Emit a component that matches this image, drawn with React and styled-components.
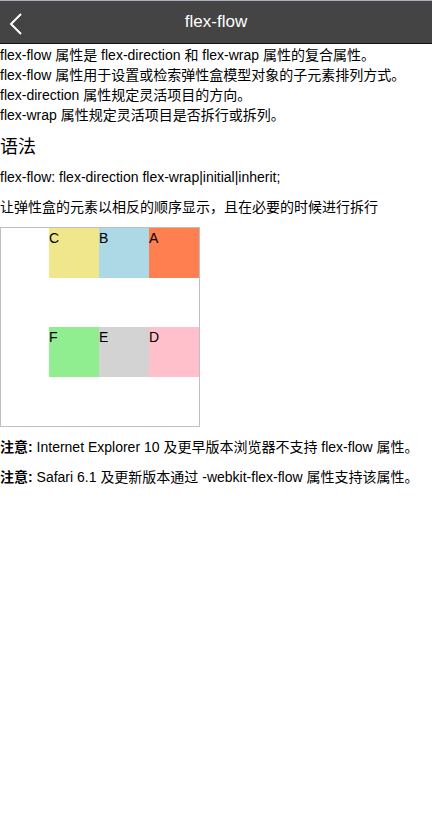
import styled, { createGlobalStyle } from 'styled-components';

const GlobalStyle = createGlobalStyle`
  * {
    box-sizing: border-box;
  }

  body {
    margin: 0;
    background: #fff;
    color: #000;
    font-family: 'Liberation Sans', 'Noto Sans CJK SC', sans-serif;
  }
`;

const items = [
  { id: 'A', color: 'coral' },
  { id: 'B', color: 'lightblue' },
  { id: 'C', color: 'khaki' },
  { id: 'D', color: 'pink' },
  { id: 'E', color: 'lightgrey' },
  { id: 'F', color: 'lightgreen' },
];

const App = () => {
  return (
    <>
      <GlobalStyle />
      <Header>
        <BackButton aria-label='back'>
          <svg width='14' height='22' viewBox='0 0 14 22' fill='none'>
            <path d='M12 1 L2 11 L12 21' stroke='#fff' strokeWidth='2' />
          </svg>
        </BackButton>
        <HeaderTitle>flex-flow</HeaderTitle>
      </Header>
      <Content>
        <Intro>
          flex-flow 属性是 flex-direction 和 flex-wrap 属性的复合属性。
          <br />
          flex-flow 属性用于设置或检索弹性盒模型对象的子元素排列方式。
          <br />
          flex-direction 属性规定灵活项目的方向。
          <br />
          flex-wrap 属性规定灵活项目是否拆行或拆列。
        </Intro>
        <Heading>语法</Heading>
        <Text>flex-flow: flex-direction flex-wrap|initial|inherit;</Text>
        <Text>让弹性盒的元素以相反的顺序显示，且在必要的时候进行拆行</Text>
        <Demo>
          {items.map(({ id, color }) => (
            <Item key={id} $bg={color}>
              {id}
            </Item>
          ))}
        </Demo>
        <Note>
          <b>注意:</b> Internet Explorer 10 及更早版本浏览器不支持 flex-flow 属性。
        </Note>
        <Note>
          <b>注意:</b> Safari 6.1 及更新版本通过 -webkit-flex-flow 属性支持该属性。
        </Note>
      </Content>
    </>
  );
};

const Header = styled.header`
  position: relative;
  height: 44px;
  display: flex;
  align-items: center;
  justify-content: center;
  background: #444;
  border-top: 1px solid #a9b0bc;
  border-bottom: 1px solid #111;
`;

const BackButton = styled.button`
  position: absolute;
  left: 9px;
  top: 12px;
  padding: 0;
  border: none;
  background: none;
  display: flex;
`;

const HeaderTitle = styled.h1`
  margin: 0;
  font-size: 17px;
  font-weight: normal;
  color: #fff;
`;

const Content = styled.main`
  font-size: 14px;
  line-height: 20px;
  padding-top: 1px;
`;

const Intro = styled.p`
  margin: 0;
`;

const Heading = styled.h2`
  margin: 10px 0 8px;
  font-size: 18px;
  font-weight: normal;
  line-height: 24px;
`;

const Text = styled.p`
  margin: 0 0 10px;
`;

const Demo = styled.div`
  width: 200px;
  height: 200px;
  border: 1px solid #c0c0c0;
  display: flex;
  flex-flow: row-reverse wrap;
`;

const Item = styled.div`
  width: 50px;
  height: 50px;
  background: ${(p) => p.$bg};
  font-size: 14px;
  line-height: 20px;
`;

const Note = styled.p`
  margin: 10px 0 0;

  b {
    font-weight: bold;
  }
`;

export default App;
